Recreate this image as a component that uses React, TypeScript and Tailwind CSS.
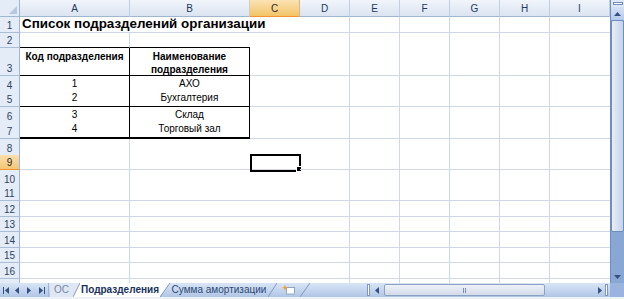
import React from 'react'

type Col = { label: string; w: string; line: boolean }
type Row = { n: number; h: string; line: boolean; hdrLine: boolean }

const cols: Col[] = [
  { label: 'A', w: 'w-[110px]', line: true },
  { label: 'B', w: 'w-[120px]', line: false },
  { label: 'C', w: 'w-[50px]', line: false },
  { label: 'D', w: 'w-[50px]', line: true },
  { label: 'E', w: 'w-[50px]', line: true },
  { label: 'F', w: 'w-[50px]', line: true },
  { label: 'G', w: 'w-[50px]', line: true },
  { label: 'H', w: 'w-[50px]', line: true },
  { label: 'I', w: 'w-[60px]', line: false },
]

// some gridlines are missing in the shot (scaled down), keep it that way
const rows: Row[] = [
  { n: 1, h: 'h-[16px]', line: true, hdrLine: true },
  { n: 2, h: 'h-[15px]', line: false, hdrLine: true },
  { n: 3, h: 'h-[28px]', line: true, hdrLine: true },
  { n: 4, h: 'h-[16px]', line: false, hdrLine: false },
  { n: 5, h: 'h-[15px]', line: true, hdrLine: true },
  { n: 6, h: 'h-[16px]', line: false, hdrLine: false },
  { n: 7, h: 'h-[16px]', line: true, hdrLine: true },
  { n: 8, h: 'h-[16px]', line: false, hdrLine: false },
  { n: 9, h: 'h-[15px]', line: true, hdrLine: true },
  { n: 10, h: 'h-[16px]', line: false, hdrLine: false },
  { n: 11, h: 'h-[15px]', line: true, hdrLine: true },
  { n: 12, h: 'h-[16px]', line: true, hdrLine: true },
  { n: 13, h: 'h-[15px]', line: true, hdrLine: true },
  { n: 14, h: 'h-[16px]', line: true, hdrLine: true },
  { n: 15, h: 'h-[15px]', line: true, hdrLine: true },
  { n: 16, h: 'h-[16px]', line: true, hdrLine: true },
  { n: 17, h: 'h-[4px]', line: false, hdrLine: false },
]

const data: Record<number, [string, string]> = {
  4: ['1', 'АХО'],
  5: ['2', 'Бухгалтерия'],
  6: ['3', 'Склад'],
  7: ['4', 'Торговый зал'],
}

function cellBorder(r: number, c: number, row: Row, col: Col) {
  let right = col.line ? 'border-r border-r-[#d0d7e5]' : ''
  if (r >= 3 && r <= 7 && c <= 1) right = 'border-r border-r-black'
  if (r === 1 && c === 0) right = ''
  let bottom = row.line ? 'border-b border-b-[#d0d7e5]' : ''
  if (c <= 1) {
    if (r === 2 || r === 3 || r === 5) bottom = 'border-b border-b-black'
    if (r === 4 || r === 6) bottom = ''
    if (r === 7) bottom = 'border-b-2 border-b-black'
  }
  return `${right} ${bottom}`
}

function CellContent({ r, c }: { r: number; c: number }) {
  if (r === 1 && c === 0)
    return (
      <div className="relative z-10 flex h-full items-end pb-px pl-[2px] whitespace-nowrap text-[13.4px] leading-[15px] font-bold text-black">
        Список подразделений организации
      </div>
    )
  if (r === 3 && c === 0)
    return (
      <div className="pt-[3px] text-center text-[10px] leading-[12px] font-bold whitespace-nowrap text-black">
        Код подразделения
      </div>
    )
  if (r === 3 && c === 1)
    return (
      <div className="pt-[2px] text-center text-[10px] leading-[13px] font-bold text-black">
        Наименование
        <br />
        подразделения
      </div>
    )
  if (data[r] && c <= 1)
    return (
      <div className="flex h-full items-end justify-center pb-[2px] text-[10px] leading-[12px] text-black">
        {data[r][c]}
      </div>
    )
  if (r === 9 && c === 2)
    return (
      <>
        <div className="absolute -top-px left-0 h-[18px] w-[51px] border-2 border-black" />
        <div className="absolute -right-[2px] -bottom-[3px] h-[6px] w-[6px] border border-white bg-black" />
      </>
    )
  return null
}

function Arrow({ dir }: { dir: 'up' | 'down' | 'left' | 'right' }) {
  const pts = {
    up: '0,4 3.5,0 7,4',
    down: '0,0 7,0 3.5,4',
    left: '4,0 4,7 0,3.5',
    right: '0,0 0,7 4,3.5',
  }[dir]
  const vert = dir === 'up' || dir === 'down'
  return (
    <svg width={vert ? 7 : 4} height={vert ? 4 : 7} viewBox={vert ? '0 0 7 4' : '0 0 4 7'}>
      <polygon points={pts} fill="#34507e" />
    </svg>
  )
}

function Slant({ fill, back }: { fill?: string; back?: string }) {
  return (
    <svg width="10" height="14" viewBox="0 0 10 14" className="shrink-0">
      {back && <polygon points="0,14 10,0 10,14" fill={back} />}
      {fill && <polygon points="0,0 10,0 0,14" fill={fill} />}
      <line x1="0" y1="14" x2="10" y2="0" stroke="#8198bd" strokeWidth="1" />
    </svg>
  )
}

function Nav() {
  return (
    <div className="flex w-[48px] items-center pl-[3px]">
      <svg width="6" height="7" viewBox="0 0 6 7">
        <rect x="0" y="0" width="1" height="7" fill="#34507e" />
        <polygon points="6,0 6,7 2,3.5" fill="#34507e" />
      </svg>
      <div className="ml-[6px]">
        <Arrow dir="left" />
      </div>
      <div className="ml-[8px]">
        <Arrow dir="right" />
      </div>
      <svg width="6" height="7" viewBox="0 0 6 7" className="ml-[8px]">
        <polygon points="0,0 0,7 4,3.5" fill="#34507e" />
        <rect x="5" y="0" width="1" height="7" fill="#34507e" />
      </svg>
    </div>
  )
}

function VScroll() {
  return (
    <div className="flex h-full w-[14px] flex-col border-l border-[#6f8dbd] bg-[#89a7d5]">
      <div className="flex h-[7px] items-center justify-center bg-[#dde7f5]">
        <div className="h-[3px] w-[10px] border border-[#7390bd] bg-white" />
      </div>
      <div className="flex h-[13px] items-center justify-center bg-gradient-to-b from-[#d4e1f4] to-[#b5caea]">
        <Arrow dir="up" />
      </div>
      <div className="h-[212px] rounded-[2px] border border-[#6f8dbd] bg-gradient-to-r from-[#e9eef6] via-[#d6e0ee] to-[#c6d4e8]" />
      <div className="flex-1" />
      <div className="flex h-[12px] items-center justify-center">
        <Arrow dir="down" />
      </div>
    </div>
  )
}

function BottomBar() {
  return (
    <div className="flex h-[14px] bg-gradient-to-b from-[#d9e5f5] to-[#b0c6e7] text-[10px] leading-[12px]">
      <Nav />
      <div className="w-[2px] border-l border-[#9fb5d8]" />
      <div className="flex w-[23px] items-center justify-center bg-[#dfe7f3] text-[#7587a6]">ОС</div>
      <svg width="7" height="14" viewBox="0 0 7 14" className="shrink-0">
        <polygon points="0,0 7,0 7,14 0,14" fill="#dfe7f3" />
        <polygon points="0,14 7,0 7,14" fill="#ffffff" />
        <line x1="0" y1="14" x2="7" y2="0" stroke="#8198bd" strokeWidth="1" />
      </svg>
      <div className="flex w-[80px] items-center justify-center bg-white font-bold text-[#17325c]">
        Подразделения
      </div>
      <Slant fill="#ffffff" />
      <div className="flex w-[98px] items-center justify-center text-[#2d4873]">Сумма амортизации</div>
      <svg width="9" height="14" viewBox="0 0 9 14" className="shrink-0">
        <line x1="0" y1="14" x2="9" y2="0" stroke="#8198bd" strokeWidth="1" />
      </svg>
      <div className="flex w-[23px] items-center justify-center">
        <svg width="14" height="10" viewBox="0 0 14 10">
          <rect x="4.5" y="2.5" width="8" height="7" fill="#ffffff" stroke="#8ea2c2" />
          <rect x="4.5" y="8" width="8" height="1.5" fill="#c9d3e3" />
          <polygon points="3,0 4,2 6,2.5 4,3.5 3,5.5 2,3.5 0,2.5 2,2" fill="#f0a23a" />
        </svg>
      </div>
      <Slant />
      <div className="flex-1" />
      <div className="my-[1px] w-[3px] border border-[#7f97bf] bg-white" />
      <div className="flex w-[14px] items-center justify-center">
        <Arrow dir="left" />
      </div>
      <div className="my-[1px] flex w-[161px] items-center justify-center rounded-[2px] border border-[#8ba1c6] bg-gradient-to-b from-[#eef2f8] to-[#d2dbe8]">
        <div className="h-[5px] w-[3px] border-x border-[#7b8fae]" />
      </div>
      <div className="w-[50px]" />
      <div className="flex w-[10px] items-center justify-center">
        <Arrow dir="right" />
      </div>
      <div className="my-[1px] w-[3px] border border-[#7f97bf] bg-white" />
      <div className="w-[2px]" />
      <div className="w-[14px] bg-[#9ab4de]" />
    </div>
  )
}

export default function App() {
  return (
    <div className="flex h-[299px] w-[624px] flex-col overflow-hidden bg-white font-['Liberation_Sans',Arial,sans-serif]">
      <div className="flex h-[283px]">
        <div className="w-[610px] overflow-hidden">
          <div className="flex h-[17px]">
            <div className="flex w-[20px] items-end justify-end border-r border-b border-[#9eb6ce] bg-[#e4ecf7] p-[2px]">
              <svg width="8" height="8" viewBox="0 0 8 8">
                <polygon points="8,0 8,8 0,8" fill="#b8c8dc" />
              </svg>
            </div>
            {cols.map((col) => (
              <div
                key={col.label}
                className={`${col.w} flex items-center justify-center border-r border-b text-[10px] ${
                  col.label === 'C'
                    ? 'border-r-[#f2b255] border-b-[#f29436] bg-gradient-to-b from-[#fbe3b4] to-[#f2c466] text-[#2a2a2a]'
                    : 'border-r-[#c0cfe2] border-b-[#9eb6ce] bg-gradient-to-b from-[#f1f5fb] to-[#dbe4f1] text-[#1e3a60]'
                }`}
              >
                {col.label}
              </div>
            ))}
          </div>
          {rows.map((row) => (
            <div key={row.n} className={`flex ${row.h}`}>
              <div
                className={`flex w-[20px] items-end justify-center border-r border-r-[#9eb6ce] text-[10px] leading-[12px] ${
                  row.n === 9
                    ? 'border-b border-b-[#f29436] bg-gradient-to-b from-[#fbe0ab] to-[#f3c671] text-[#2a2a2a]'
                    : 'bg-[#e4ecf7] text-[#2f4360]'
                } ${row.hdrLine && row.n !== 9 ? 'border-b border-b-[#a9bdd4]' : ''}`}
              >
                {row.n < 17 ? row.n : ''}
              </div>
              {cols.map((col, c) => (
                <div key={col.label} className={`relative ${col.w} ${cellBorder(row.n, c, row, col)}`}>
                  <CellContent r={row.n} c={c} />
                </div>
              ))}
            </div>
          ))}
        </div>
        <VScroll />
      </div>
      <BottomBar />
      <div className="h-[2px] bg-[#eef2f8]" />
    </div>
  )
}
